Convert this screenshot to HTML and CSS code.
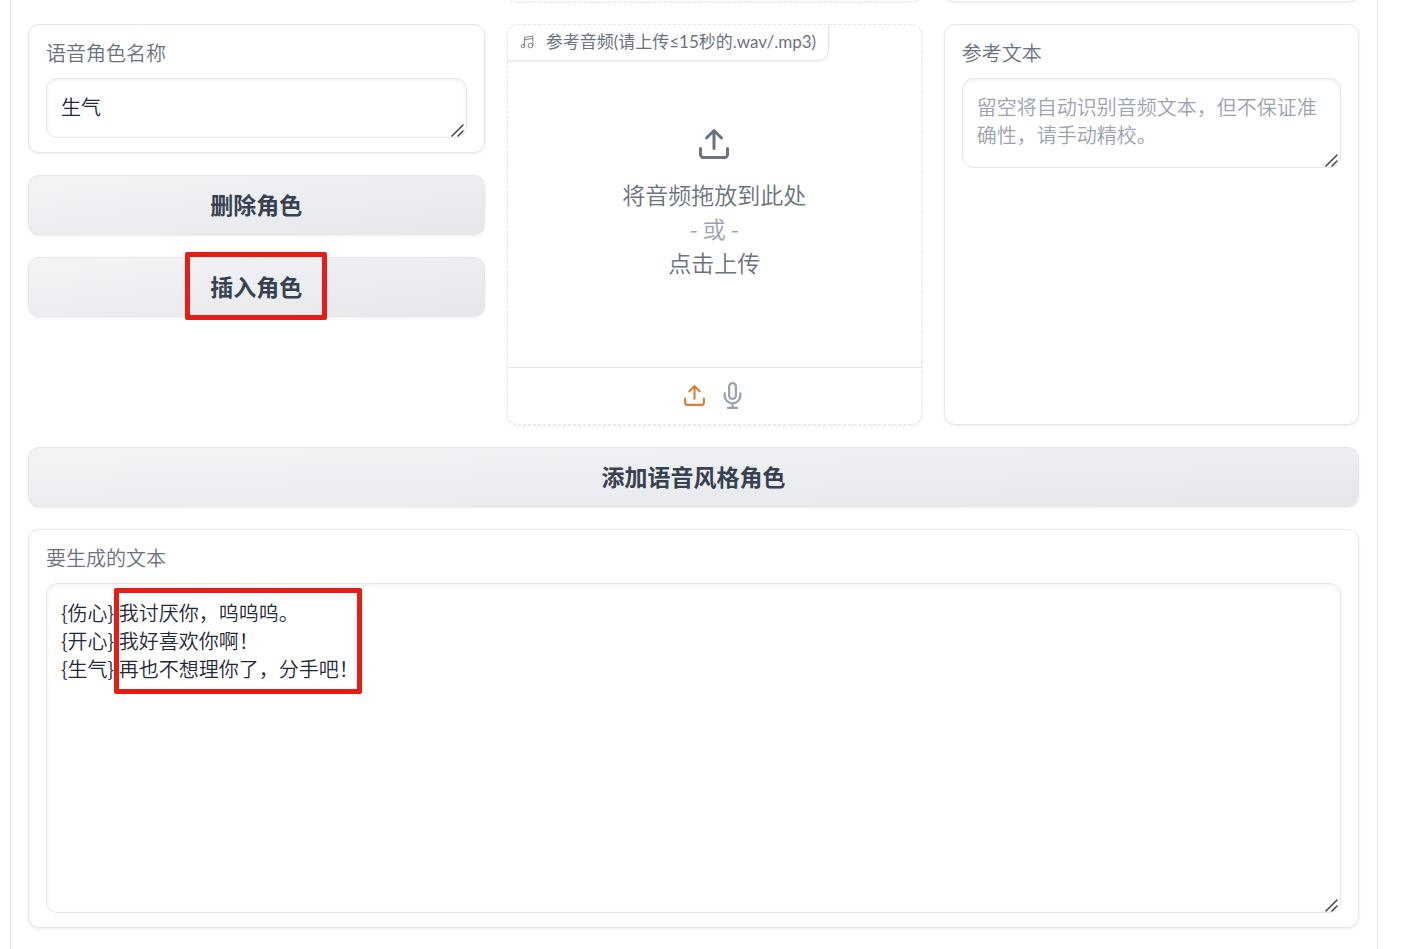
FILE: index.html
```html
<!DOCTYPE html>
<html lang="zh-CN">
<head>
  <meta charset="UTF-8" />
  <meta name="viewport" content="width=device-width, initial-scale=1.0"/>
  <title>语音风格角色</title>
  <link rel="stylesheet" href="styles.css">
</head>
<body>
  <main class="panel">
    <div class="row row-prev">
      <div></div>
      <div class="card dashed"></div>
      <div class="card"></div>
    </div>

    <div class="row">
      <!-- 角色 -->
      <div class="column">
        <div class="card block">
          <label for="role-name">语音角色名称</label>
          <div class="field">
            <textarea id="role-name" rows="1">生气</textarea>
            <svg class="grip" viewBox="0 0 14 14"><path d="M1 13L12 2M7 13L12 8"/></svg>
          </div>
        </div>
        <button class="btn">删除角色</button>
        <button class="btn"><span class="marked">插入角色</span></button>
      </div>

      <!-- 参考音频 -->
      <div class="card dashed audio">
        <div class="tab">
          <svg class="icon-music" viewBox="0 0 24 24"><path d="M8 19V4l14-2v15M8 8l14-2"/><circle cx="5" cy="19" r="3"/><circle cx="18" cy="18" r="4"/></svg>
          <span>参考音频(请上传≤15秒的.wav/.mp3)</span>
        </div>
        <button class="upload">
          <svg class="icon-upload" viewBox="0 0 24 24"><path d="M21 15v4a2 2 0 0 1-2 2H5a2 2 0 0 1-2-2v-4M17 8l-5-5-5 5M12 3v12"/></svg>
          <span>将音频拖放到此处</span>
          <span class="or">- 或 -</span>
          <span>点击上传</span>
        </button>
        <div class="sources">
          <button class="source active" aria-label="上传">
            <svg class="icon-small" viewBox="0 0 24 24"><path d="M21 15v4a2 2 0 0 1-2 2H5a2 2 0 0 1-2-2v-4M17 8l-5-5-5 5M12 3v12"/></svg>
          </button>
          <button class="source" aria-label="录音">
            <svg class="icon-mic" viewBox="0 0 24 24"><path d="M12 1a3 3 0 0 0-3 3v8a3 3 0 0 0 6 0V4a3 3 0 0 0-3-3zM19 10v2a7 7 0 0 1-14 0v-2M12 19v4M8 23h8"/></svg>
          </button>
        </div>
      </div>

      <!-- 参考文本 -->
      <div class="card block">
        <label for="ref-text">参考文本</label>
        <div class="field">
          <textarea id="ref-text" class="medium" placeholder="留空将自动识别音频文本，但不保证准确性，请手动精校。"></textarea>
          <svg class="grip" viewBox="0 0 14 14"><path d="M1 13L12 2M7 13L12 8"/></svg>
        </div>
      </div>
    </div>

    <button class="btn">添加语音风格角色</button>

    <!-- 要生成的文本 -->
    <div class="card block">
      <label for="gen-text">要生成的文本</label>
      <div class="field">
        <textarea id="gen-text" class="large">{伤心} 我讨厌你，呜呜呜。
{开心} 我好喜欢你啊！
{生气} 再也不想理你了，分手吧！</textarea>
        <div class="mark"></div>
        <svg class="grip" viewBox="0 0 14 14"><path d="M1 13L12 2M7 13L12 8"/></svg>
      </div>
    </div>
  </main>
</body>
</html>
```
FILE: styles.css
```css
* { box-sizing: border-box; }
body {
  margin: 0; background: #fff; color: #1f2937;
  font-family: "Noto Sans CJK SC", sans-serif; font-size: 20px; line-height: 28px; font-weight: 350;
}
button, textarea { font: inherit; }
svg { fill: none; stroke: currentColor; stroke-width: 2; stroke-linecap: round; stroke-linejoin: round; }

.panel {
  margin: 0 25px 0 10px; padding: 0 18px 21px 17px;
  border: solid #e5e7eb; border-width: 0 1px;
  display: flex; flex-direction: column; gap: 22px;
  overflow: hidden;
}
.row { display: grid; grid-template-columns: 11fr 10fr 10fr; gap: 22px; }
.row-prev .card { height: 20px; margin-top: -18px; }
.column { display: flex; flex-direction: column; gap: 22px; }

.card {
  border: 1px solid #e5e7eb; border-radius: 11px; background: #fff;
  box-shadow: 0 1px 3px rgba(0,0,0,0.07);
}
.card.dashed { border-style: dashed; }
.block { padding: 14px 17px; }
.block label { display: block; margin-bottom: 11px; color: #6b7280; }

.field { position: relative; }
textarea {
  display: block; width: 100%; height: 60px; padding: 14px; resize: none; outline: none;
  border: 1px solid #e5e7eb; border-radius: 11px; background: #fff; color: #1f2937;
  box-shadow: inset 0 2px 5px rgba(0,0,0,0.05); overflow: hidden;
}
textarea::placeholder { color: #9ca3af; opacity: 1; }
textarea.medium { height: 90px; }
textarea.large { height: 330px; padding-top: 15px; }
.grip {
  position: absolute; right: 2px; bottom: 1px; width: 14px; height: 14px;
  color: #444; stroke-width: 1.5; pointer-events: none;
}

.btn {
  width: 100%; height: 60px; padding: 0 0 2px; cursor: pointer;
  border: 1px solid #e5e7eb; border-radius: 11px; color: #374151;
  background: linear-gradient(to bottom right, #f3f4f6, #e5e7eb);
  box-shadow: 0 1px 3px rgba(0,0,0,0.07);
  font-size: 23px; font-weight: 700;
}

/* red highlight frames */
.marked { position: relative; }
.marked::after {
  content: ""; position: absolute; inset: -17px -25px;
  border: 5px solid #e81c12; border-radius: 2px;
}
.mark {
  position: absolute; left: 68px; top: 5px; width: 248px; height: 106px;
  border: 5px solid #e81c12; border-radius: 2px; pointer-events: none;
}

.audio { position: relative; min-height: 401px; display: flex; flex-direction: column; overflow: hidden; }
.tab {
  position: absolute; top: 0; left: 0; height: 36px; padding: 0 12px 2px 12px;
  display: flex; align-items: center; gap: 12px;
  border: solid #e5e7eb; border-width: 0 1px 1px 0; border-radius: 0 0 11px 0;
  box-shadow: 0 1px 3px rgba(0,0,0,0.07);
  color: #6b7280; font-family: Lato, "Noto Sans CJK SC", sans-serif; font-size: 17px; font-weight: 400; white-space: nowrap;
}
.upload {
  flex: 1; padding: 13px 0 0; border: none; background: none; cursor: pointer;
  display: flex; flex-direction: column; align-items: center; justify-content: center;
  color: #6b7280; font-size: 23px; line-height: 34px;
}
.or { color: #9ca3af; }
.sources {
  height: 57px; padding-bottom: 2px; border-top: 1px solid #e5e7eb;
  display: flex; align-items: center; justify-content: center; gap: 12px;
}
.source { display: flex; padding: 0; border: none; background: none; color: #9ca3af; cursor: pointer; }
.source.active { color: #dd7b2e; }
.icon-music { width: 14px; height: 14px; stroke-width: 1.5; }
.icon-upload { width: 36px; height: 36px; margin-bottom: 15px; }
.icon-small { width: 25px; height: 25px; }
.icon-mic { width: 27px; height: 27px; }
```
